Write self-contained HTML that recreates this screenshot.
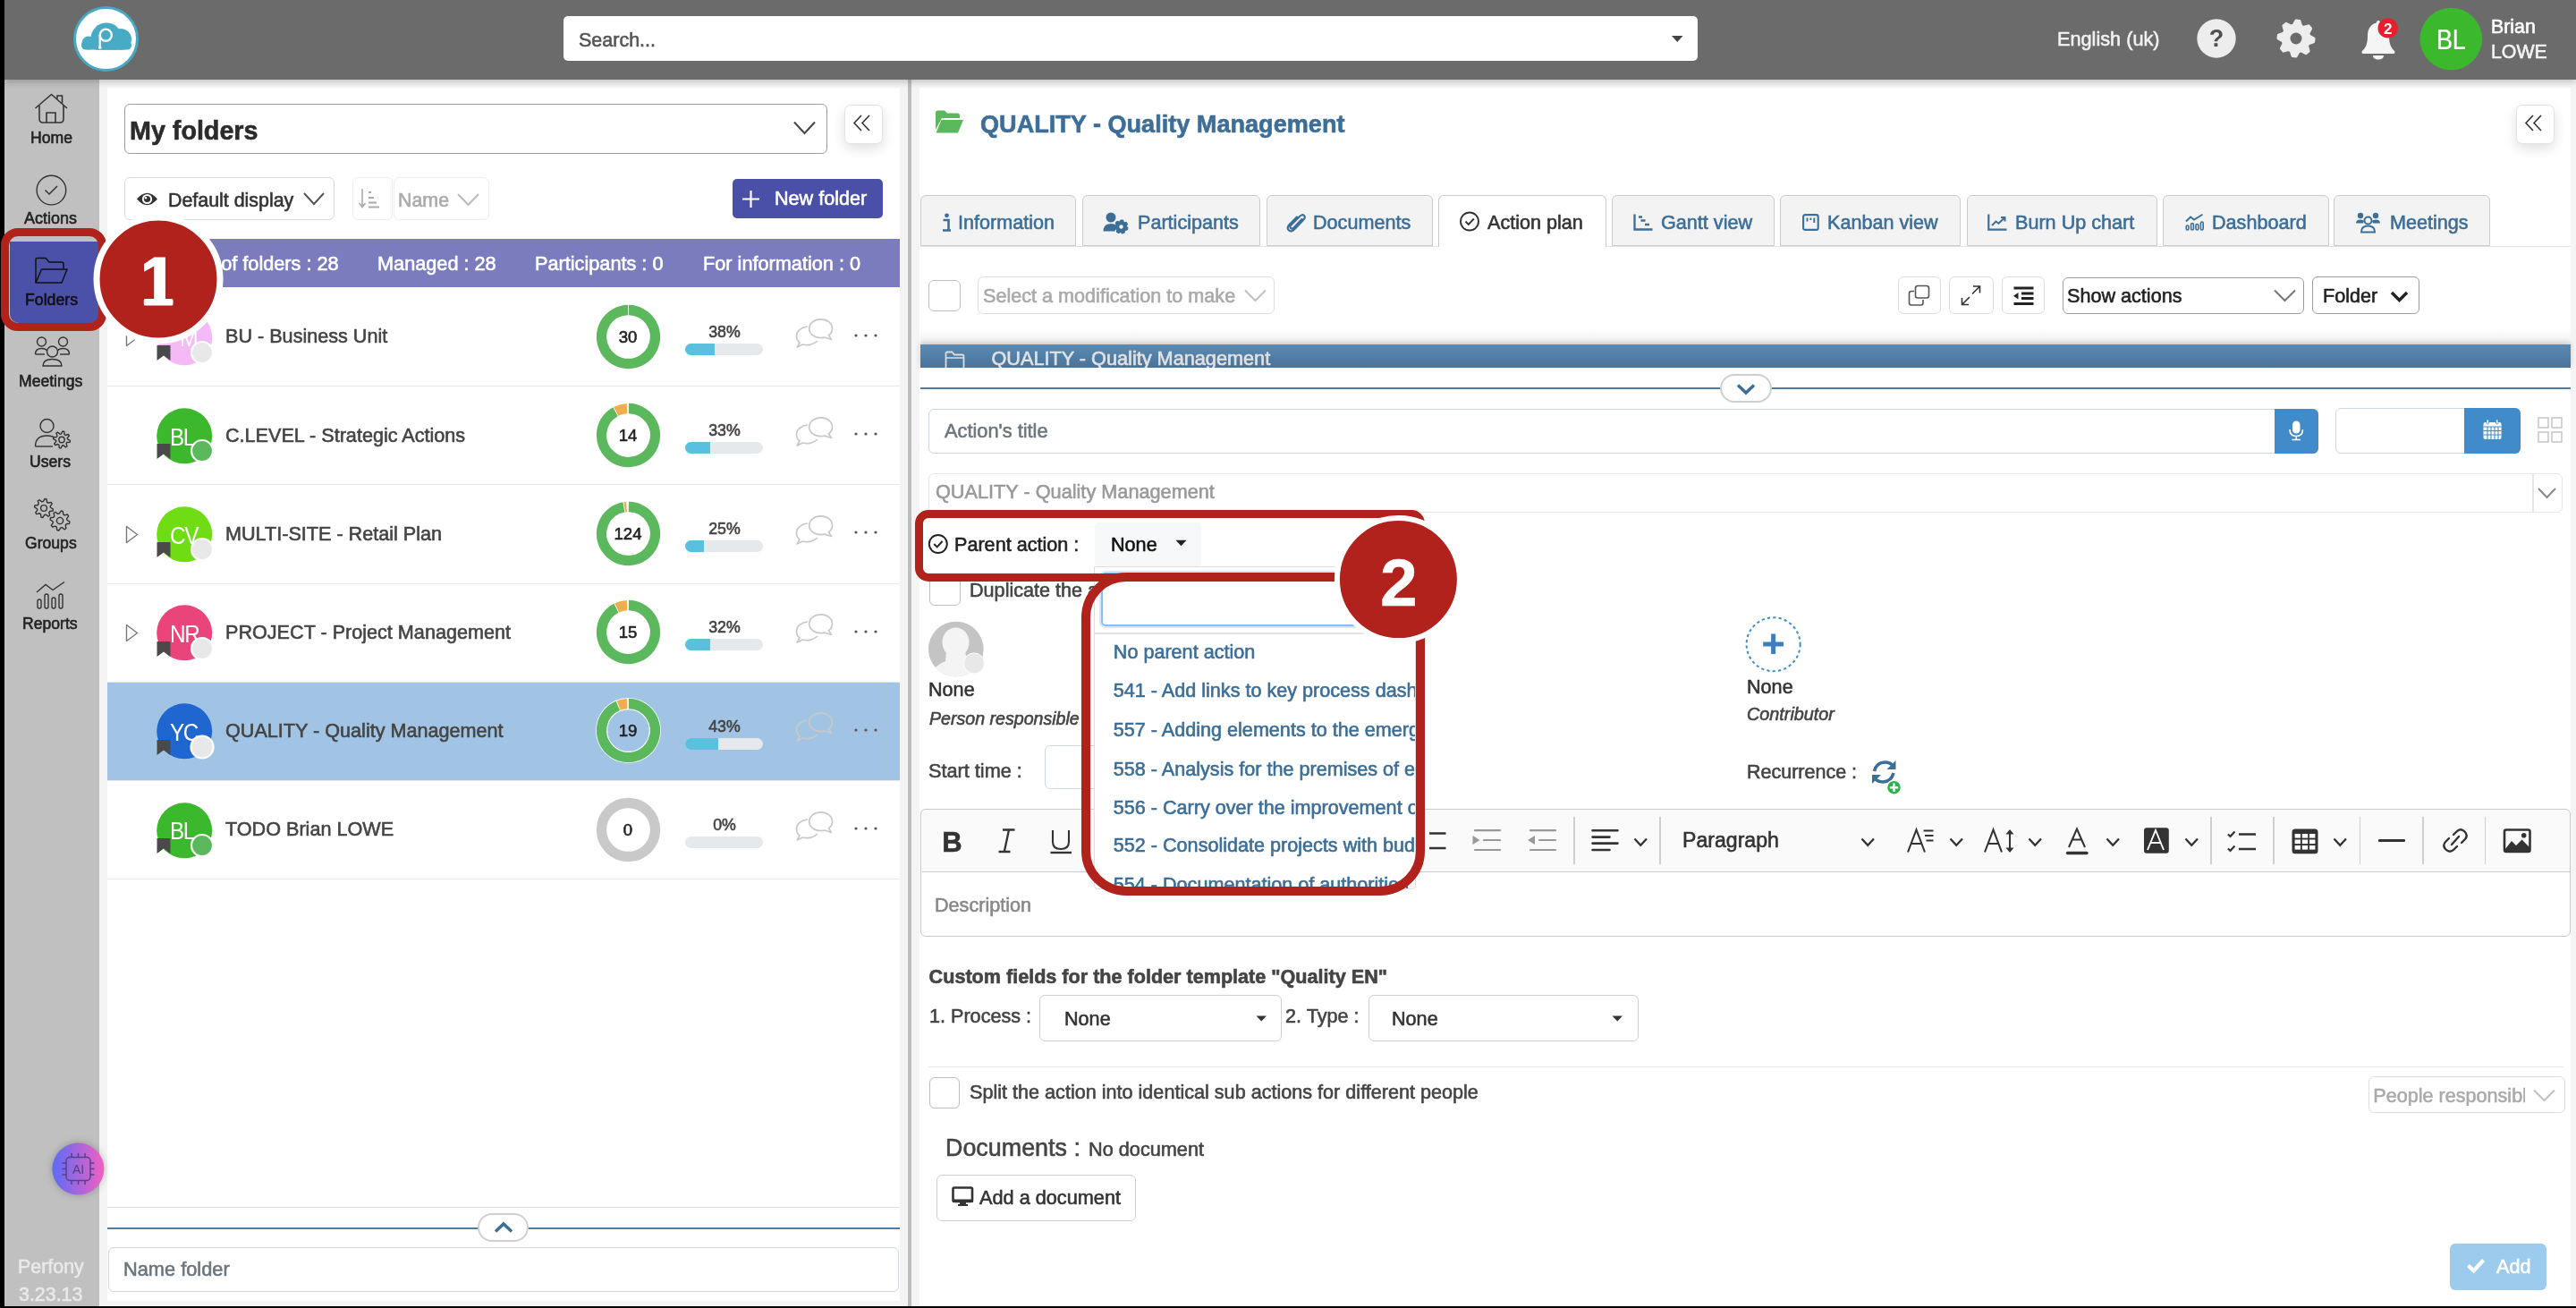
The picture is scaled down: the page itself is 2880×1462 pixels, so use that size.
<!DOCTYPE html><html><head><meta charset="utf-8"><style>
*{box-sizing:border-box;margin:0;padding:0}
html,body{width:2880px;height:1462px;overflow:hidden;background:#000;font-family:"Liberation Sans",sans-serif;color:#333;-webkit-font-smoothing:antialiased}
body{will-change:transform}
.a{position:absolute}
.t{position:absolute;white-space:nowrap;line-height:1;-webkit-text-stroke:0.6px currentColor}
svg{position:absolute;overflow:visible}
</style></head><body>
<div class="a" style="left:5px;top:89px;width:2875px;height:1371px;background:#f4f4f4"></div>
<div class="a" style="left:5px;top:89px;width:106px;height:1371px;background:#c0c0c0"></div>
<div class="a" style="left:120px;top:98px;width:886px;height:1356px;background:#fff"></div>
<div class="a" style="left:1015px;top:89px;width:4px;height:1371px;background:#bdbdbd"></div>
<div class="a" style="left:1028px;top:98px;width:1846px;height:1362px;background:#fff"></div>
<div class="a" style="left:5px;top:0px;width:2875px;height:89px;background:#6b6b6b;box-shadow:0 3px 7px rgba(0,0,0,.2)"></div>
<svg style="left:82px;top:7px;" width="73" height="73" viewBox="0 0 73 73"><circle cx="36.5" cy="36.5" r="35" fill="#fff" stroke="#47a8c4" stroke-width="3"/>
<defs><clipPath id="lgc"><rect x="0" y="0" width="73" height="48.7"/></clipPath></defs><g fill="#48abc6" clip-path="url(#lgc)"><circle cx="17" cy="41" r="7.5"/><circle cx="37" cy="36" r="17.5"/><circle cx="53" cy="37" r="12"/><rect x="9" y="38" width="56" height="10.7" rx="5.3"/></g>
<circle cx="36.3" cy="32.2" r="6.6" fill="none" stroke="#fff" stroke-width="2.4"/>
<path d="M29.7 32 V46" stroke="#fff" stroke-width="2.2" fill="none"/><circle cx="29.7" cy="46.3" r="1.7" fill="#fff"/></svg>
<div class="a" style="left:630px;top:18px;width:1268px;height:50px;background:#fff;border-radius:5px"></div>
<div class="t " style="left:647.0px;top:33.7px;font-size:22.25px;color:#555;font-weight:normal;font-style:normal;transform:scaleX(0.9662);transform-origin:left;">Search...</div>
<svg style="left:1868.5px;top:40.2px;" width="13" height="8" viewBox="0 0 13 8"><path d="M0 0 H12.5 L6.25 7 Z" fill="#444"/></svg>
<div class="t " style="left:2300.0px;top:32.6px;font-size:22.46px;color:#f2f2f2;font-weight:normal;font-style:normal;transform:scaleX(0.9662);transform-origin:left;">English (uk)</div>
<svg style="left:2456px;top:21px;" width="44" height="44" viewBox="0 0 44 44"><circle cx="22" cy="22" r="21.7" fill="#ededed"/><text x="22" y="31" text-anchor="middle" font-family="Liberation Sans" font-weight="bold" font-size="27" fill="#505050">?</text></svg>
<svg style="left:2545px;top:21px;" width="44" height="44" viewBox="0 0 44 44"><polygon points="22.00,2.00 25.90,2.38 27.74,8.14 30.33,9.53 36.14,7.86 38.63,10.89 35.86,16.26 36.71,19.07 42.00,22.00 41.62,25.90 35.86,27.74 34.47,30.33 36.14,36.14 33.11,38.63 27.74,35.86 24.93,36.71 22.00,42.00 18.10,41.62 16.26,35.86 13.67,34.47 7.86,36.14 5.37,33.11 8.14,27.74 7.29,24.93 2.00,22.00 2.38,18.10 8.14,16.26 9.53,13.67 7.86,7.86 10.89,5.37 16.26,8.14 19.07,7.29" fill="#ededed" stroke="#ededed" stroke-width="3" stroke-linejoin="round"/><circle cx="22" cy="22" r="6.5" fill="#6b6b6b"/></svg>
<svg style="left:2638px;top:20px;" width="44" height="48" viewBox="0 0 44 48"><path d="M21 3 C22.5 3 23 4 23 5.5 C30 7 33 13 33 20 C33 29 35 33 39 37 C40 38 39.5 40 38 40 H4 C2.5 40 2 38 3 37 C7 33 9 29 9 20 C9 13 12 7 19 5.5 C19 4 19.5 3 21 3 Z" fill="#f5f5f5"/>
<path d="M15 42 H27 C27 45 24.5 46.5 21 46.5 C17.5 46.5 15 45 15 42 Z" fill="#f5f5f5"/></svg>
<svg style="left:2658px;top:20px;" width="24" height="24" viewBox="0 0 24 24"><circle cx="11.7" cy="11.4" r="11.2" fill="#e8202e"/><text x="11.7" y="18" text-anchor="middle" font-family="Liberation Sans" font-weight="bold" font-size="17" fill="#fff">2</text></svg>
<svg style="left:2705px;top:8px;" width="70" height="70" viewBox="0 0 70 70"><circle cx="35.3" cy="35.5" r="34.8" fill="#3cb82d"/></svg>
<div class="t " style="left:2723.5px;top:29.3px;font-size:31.50px;color:#fff;font-weight:normal;font-style:normal;letter-spacing:-0.5px;transform:scaleX(0.86);transform-origin:left;-webkit-text-stroke:0.2px #fff">BL</div>
<div class="t " style="left:2785.0px;top:19.4px;font-size:22.05px;color:#fff;font-weight:normal;font-style:normal;transform:scaleX(0.9662);transform-origin:left;">Brian</div>
<div class="t " style="left:2785.0px;top:47.3px;font-size:22.05px;color:#f4f4f4;font-weight:normal;font-style:normal;transform:scaleX(0.9662);transform-origin:left;">LOWE</div>
<svg style="left:36px;top:102px;" width="44" height="40" viewBox="0 0 44 40"><path d="M3.5 19 L21.5 3.5 L39 19" fill="none" stroke="#333" stroke-width="1.6" stroke-linejoin="round"/>
<path d="M8 16 V31 Q8 35 12 35 H31 Q35 35 35 31 V16" fill="none" stroke="#333" stroke-width="1.6"/>
<path d="M28 8.5 V5 H33.5 V13.5" fill="none" stroke="#333" stroke-width="1.6"/>
<path d="M16 35 V24 H26 V35" fill="none" stroke="#333" stroke-width="1.6"/></svg>
<div class="t " style="left:33.5px;top:145.0px;font-size:18.22px;color:#222;font-weight:normal;font-style:normal;transform:scaleX(0.9662);transform-origin:left;">Home</div>
<svg style="left:38px;top:193px;" width="40" height="40" viewBox="0 0 40 40"><circle cx="19.4" cy="19.6" r="16.3" fill="none" stroke="#333" stroke-width="1.4"/><path d="M12.5 19.5 L17 24 L26 15" fill="none" stroke="#333" stroke-width="1.5"/></svg>
<div class="t " style="left:27.2px;top:235.4px;font-size:18.63px;color:#222;font-weight:normal;font-style:normal;transform:scaleX(0.9662);transform-origin:left;">Actions</div>
<svg style="left:36.5px;top:375px;" width="48" height="38" viewBox="0 0 48 38"><circle cx="9.5" cy="7" r="5" fill="none" stroke="#333" stroke-width="1.4"/>
<circle cx="33.5" cy="7" r="5" fill="none" stroke="#333" stroke-width="1.4"/>
<path d="M2.5 21 Q2.5 14.5 9.5 14.5 Q14 14.5 15.5 17" fill="none" stroke="#333" stroke-width="1.4"/>
<path d="M40.5 21 Q40.5 14.5 33.5 14.5 Q29 14.5 27.5 17" fill="none" stroke="#333" stroke-width="1.4"/>
<path d="M2.5 21 H13" fill="none" stroke="#333" stroke-width="1.4"/><path d="M30 21 H40.5" fill="none" stroke="#333" stroke-width="1.4"/>
<circle cx="21.5" cy="18" r="6" fill="none" stroke="#333" stroke-width="1.4"/>
<path d="M11 34 Q11 26.5 21.5 26.5 Q32 26.5 32 34 Z" fill="none" stroke="#333" stroke-width="1.4"/></svg>
<div class="t " style="left:20.5px;top:416.9px;font-size:18.22px;color:#222;font-weight:normal;font-style:normal;transform:scaleX(0.9662);transform-origin:left;">Meetings</div>
<svg style="left:36.5px;top:466px;" width="48" height="38" viewBox="0 0 48 38"><circle cx="15.5" cy="10" r="7.5" fill="none" stroke="#333" stroke-width="1.4"/>
<path d="M2.5 33 Q2.5 21 15.5 21 Q22 21 25 24" fill="none" stroke="#333" stroke-width="1.4"/><path d="M2.5 33 H22" fill="none" stroke="#333" stroke-width="1.4"/><polygon points="41.45,26.43 41.09,28.26 37.73,28.56 37.02,29.62 38.03,32.84 36.48,33.88 33.89,31.72 32.64,31.97 31.07,34.95 29.24,34.59 28.94,31.23 27.88,30.52 24.66,31.53 23.62,29.98 25.78,27.39 25.53,26.14 22.55,24.57 22.91,22.74 26.27,22.44 26.98,21.38 25.97,18.16 27.52,17.12 30.11,19.28 31.36,19.03 32.93,16.05 34.76,16.41 35.06,19.77 36.12,20.48 39.34,19.47 40.38,21.02 38.22,23.61 38.47,24.86" fill="#c0c0c0" stroke="#333" stroke-width="1.4" stroke-linejoin="round"/><circle cx="32" cy="25.5" r="3.2" fill="none" stroke="#333" stroke-width="1.4"/></svg>
<div class="t " style="left:33.3px;top:507.4px;font-size:18.22px;color:#222;font-weight:normal;font-style:normal;transform:scaleX(0.9662);transform-origin:left;">Users</div>
<svg style="left:35.5px;top:556px;" width="48" height="40" viewBox="0 0 48 40"><polygon points="23.45,13.03 23.05,15.05 19.61,15.54 18.80,16.76 19.66,20.12 17.95,21.26 15.18,19.18 13.74,19.46 11.97,22.45 9.95,22.05 9.46,18.61 8.24,17.80 4.88,18.66 3.74,16.95 5.82,14.18 5.54,12.74 2.55,10.97 2.95,8.95 6.39,8.46 7.20,7.24 6.34,3.88 8.05,2.74 10.82,4.82 12.26,4.54 14.03,1.55 16.05,1.95 16.54,5.39 17.76,6.20 21.12,5.34 22.26,7.05 20.18,9.82 20.46,11.26" fill="#c0c0c0" stroke="#333" stroke-width="1.4" stroke-linejoin="round"/><circle cx="13" cy="12" r="3.4" fill="none" stroke="#333" stroke-width="1.4"/><polygon points="41.95,27.08 41.53,29.19 38.06,29.77 37.18,31.08 37.98,34.50 36.19,35.70 33.32,33.66 31.78,33.96 29.92,36.95 27.81,36.53 27.23,33.06 25.92,32.18 22.50,32.98 21.30,31.19 23.34,28.32 23.04,26.78 20.05,24.92 20.47,22.81 23.94,22.23 24.82,20.92 24.02,17.50 25.81,16.30 28.68,18.34 30.22,18.04 32.08,15.05 34.19,15.47 34.77,18.94 36.08,19.82 39.50,19.02 40.70,20.81 38.66,23.68 38.96,25.22" fill="#c0c0c0" stroke="#333" stroke-width="1.4" stroke-linejoin="round"/><circle cx="31" cy="26" r="3.6" fill="none" stroke="#333" stroke-width="1.4"/></svg>
<div class="t " style="left:27.5px;top:597.9px;font-size:18.22px;color:#222;font-weight:normal;font-style:normal;transform:scaleX(0.9662);transform-origin:left;">Groups</div>
<svg style="left:38px;top:648px;" width="40" height="36" viewBox="0 0 40 36"><path d="M3 14 L13 5.5 L21 11.5 L34 2.5" fill="none" stroke="#333" stroke-width="1.4"/>
<rect x="4" y="22" width="4" height="10" rx="2" fill="none" stroke="#333" stroke-width="1.4"/>
<rect x="12" y="16" width="4" height="16" rx="2" fill="none" stroke="#333" stroke-width="1.4"/>
<rect x="20" y="20" width="4" height="12" rx="2" fill="none" stroke="#333" stroke-width="1.4"/>
<rect x="28" y="16" width="4" height="16" rx="2" fill="none" stroke="#333" stroke-width="1.4"/></svg>
<div class="t " style="left:25.0px;top:688.4px;font-size:18.22px;color:#222;font-weight:normal;font-style:normal;transform:scaleX(0.9662);transform-origin:left;">Reports</div>
<div class="a" style="left:10.7px;top:270px;width:100.6px;height:91px;background:#4b51a9;border-radius:0 0 10px 10px"></div>
<svg style="left:37px;top:286px;" width="42" height="34" viewBox="0 0 42 34"><path d="M3 30 V4 Q3 2.5 4.5 2.5 H14 L18 7 H32 Q34 7 34 9 V14" fill="none" stroke="#111" stroke-width="1.5" stroke-linejoin="round"/>
<path d="M3 30 L9.5 15 H38 L32 30 Z" fill="none" stroke="#111" stroke-width="1.5" stroke-linejoin="round"/></svg>
<div class="t " style="left:28.0px;top:325.9px;font-size:18.32px;color:#111;font-weight:normal;font-style:normal;transform:scaleX(0.9662);transform-origin:left;">Folders</div>
<svg style="left:56px;top:1275px;filter:drop-shadow(0 0 4px rgba(0,0,0,.25))" width="64" height="64" viewBox="0 0 64 64"><defs><linearGradient id="aig" x1="0" x2="1" y1="0" y2="0"><stop offset="0" stop-color="#5b6cf6"/><stop offset="1" stop-color="#f35fc0"/></linearGradient></defs>
<circle cx="31.4" cy="31.5" r="29" fill="url(#aig)"/>
<rect x="18" y="18.5" width="27" height="26" rx="4" fill="none" stroke="#55408a" stroke-width="1.5"/>
<path d="M24 18.5 V14 M31.5 18.5 V14 M39 18.5 V14 M24 44.5 V49 M31.5 44.5 V49 M39 44.5 V49 M18 25 H13.5 M18 31.5 H13.5 M18 38 H13.5 M45 25 H49.5 M45 31.5 H49.5 M45 38 H49.5" stroke="#55408a" stroke-width="1.5"/>
<text x="31.5" y="37" text-anchor="middle" font-family="Liberation Sans" font-size="14" fill="#55408a">AI</text></svg>
<div class="t " style="left:20.2px;top:1405.1px;font-size:22.15px;color:#e9e9e9;font-weight:normal;font-style:normal;transform:scaleX(0.9662);transform-origin:left;">Perfony</div>
<div class="t " style="left:21.0px;top:1436.1px;font-size:22.15px;color:#e9e9e9;font-weight:normal;font-style:normal;transform:scaleX(0.9662);transform-origin:left;">3.23.13</div>
<div class="a" style="left:139px;top:116px;width:786px;height:56px;border:1.5px solid #9d9d9d;border-radius:6px;background:#fff"></div>
<div class="t " style="left:145.0px;top:131.9px;font-size:28.70px;color:#2b2b2b;font-weight:bold;font-style:normal;">My folders</div>
<svg style="left:886px;top:134px;" width="28" height="18" viewBox="0 0 28 18"><path d="M2 2.5 L13.5 15 L25 2.5" fill="none" stroke="#444" stroke-width="2"/></svg>
<div class="a" style="left:944px;top:117px;width:43px;height:44px;background:#fff;border:1px solid #e3e3e3;border-radius:7px;box-shadow:0 5px 14px rgba(0,0,0,.13)"></div>
<svg style="left:953px;top:127px;" width="22" height="22" viewBox="0 0 22 22"><path d="M10 2 L2 10.5 L10 19 M19 2 L11 10.5 L19 19" fill="none" stroke="#333" stroke-width="1.6"/></svg>
<div class="a" style="left:139px;top:198px;width:235px;height:48px;border:1px solid #d9d9d9;border-radius:6px;background:#fff"></div>
<svg style="left:152px;top:212px;" width="26" height="21" viewBox="0 0 26 21"><path d="M1 10.5 Q12.5 -3 24 10.5 Q12.5 24 1 10.5 Z" fill="#333"/><circle cx="12.5" cy="10.5" r="5.6" fill="#fff"/><circle cx="12.5" cy="10.5" r="3.6" fill="#333"/><circle cx="11" cy="9.2" r="1.2" fill="#fff"/></svg>
<div class="t " style="left:187.5px;top:212.5px;font-size:22.15px;color:#333;font-weight:normal;font-style:normal;transform:scaleX(0.9662);transform-origin:left;">Default display</div>
<svg style="left:339px;top:215px;" width="24" height="15" viewBox="0 0 24 15"><path d="M1 1 L12 13 L23 1" fill="none" stroke="#555" stroke-width="2"/></svg>
<div class="a" style="left:393.5px;top:198px;width:45px;height:48px;border:1px solid #eeeeee;border-radius:6px;background:#fff"></div>
<svg style="left:401px;top:210px;" width="24" height="24" viewBox="0 0 24 24"><path d="M4 1 V21 M0.5 17 L4 21.5 L7.5 17" fill="none" stroke="#aaa" stroke-width="1.6"/><path d="M11 5 H14 M11 11 H17 M11 16.5 H20 M11 21.5 H23" stroke="#aaa" stroke-width="2"/></svg>
<div class="a" style="left:440px;top:198px;width:107px;height:48px;border:1px solid #eeeeee;border-radius:6px;background:#fff"></div>
<div class="t " style="left:445.3px;top:212.5px;font-size:22.15px;color:#aaa;font-weight:normal;font-style:normal;transform:scaleX(0.9662);transform-origin:left;">Name</div>
<svg style="left:511px;top:216px;" width="25" height="15" viewBox="0 0 25 15"><path d="M1 1 L12.5 13 L24 1" fill="none" stroke="#bbb" stroke-width="2"/></svg>
<div class="a" style="left:819px;top:200px;width:168px;height:44px;background:#4a4fa8;border-radius:5px"></div>
<svg style="left:830px;top:213px;" width="19" height="19" viewBox="0 0 19 19"><path d="M9.5 0 V19 M0 9.5 H19" stroke="#fff" stroke-width="2.2"/></svg>
<div class="t " style="left:866.0px;top:210.9px;font-size:22.36px;color:#fff;font-weight:normal;font-style:normal;transform:scaleX(0.9662);transform-origin:left;">New folder</div>
<div class="a" style="left:120px;top:267.2px;width:886px;height:54.3px;background:#7a7cbe"></div>
<div class="t " style="left:164.4px;top:283.8px;font-size:22.46px;color:#fff;font-weight:normal;font-style:normal;transform:scaleX(0.9662);transform-origin:left;">Number of folders : 28</div>
<div class="t " style="left:422.0px;top:283.8px;font-size:22.46px;color:#fff;font-weight:normal;font-style:normal;transform:scaleX(0.9662);transform-origin:left;">Managed : 28</div>
<div class="t " style="left:598.0px;top:283.8px;font-size:22.46px;color:#fff;font-weight:normal;font-style:normal;transform:scaleX(0.9662);transform-origin:left;">Participants : 0</div>
<div class="t " style="left:786.0px;top:283.8px;font-size:22.46px;color:#fff;font-weight:normal;font-style:normal;transform:scaleX(0.9662);transform-origin:left;">For information : 0</div>
<div class="a" style="left:120px;top:431.1px;width:886px;height:1.2px;background:#e6e6e6"></div>
<svg style="left:140px;top:366.5px;" width="16" height="22" viewBox="0 0 16 22"><path d="M1.5 1.5 L13.5 10.5 L1.5 19.5 Z" fill="none" stroke="#777" stroke-width="1.4" stroke-linejoin="round"/></svg>
<svg style="left:175px;top:345.5px;" width="64" height="64" viewBox="0 0 64 64"><circle cx="31.2" cy="31.3" r="31" fill="#f5b9f5"/></svg>
<div class="t " style="left:201.0px;top:365.4px;font-size:27.00px;color:#fff;font-weight:normal;font-style:normal;transform:scaleX(.92);transform-origin:left;-webkit-text-stroke:0">M</div>
<svg style="left:174.5px;top:386.0px;" width="16" height="18" viewBox="0 0 16 18"><path d="M0.5 0 H15.5 V17 L8 11.5 L0.5 17 Z" fill="#4a4a4a"/></svg>
<svg style="left:212px;top:380.0px;" width="28" height="28" viewBox="0 0 28 28"><circle cx="14" cy="14" r="12" fill="#e8e8e8" stroke="#fff" stroke-width="2.2"/></svg>
<div class="t " style="left:251.9px;top:365.4px;font-size:22.36px;color:#444;font-weight:normal;font-style:normal;transform:scaleX(0.9662);transform-origin:left;">BU - Business Unit</div>
<svg style="left:666.7px;top:340.6px;" width="71" height="71" viewBox="0 0 71 71"><path d="M35.92 5.50 A30 30 0 1 1 35.08 5.50" fill="none" stroke="#5cb85c" stroke-width="11.3"/></svg>
<div class="t " style="left:702.2px;top:366.5px;font-size:19.25px;color:#222;font-weight:normal;font-style:normal;transform:translateX(-50%) scaleX(0.9662);transform-origin:center;">30</div>
<div class="t " style="left:809.6px;top:361.7px;font-size:18.42px;color:#444;font-weight:normal;font-style:normal;transform:translateX(-50%) scaleX(0.9662);transform-origin:center;">38%</div>
<div class="a" style="left:765.7px;top:383.8px;width:87.2px;height:13.1px;background:#e6e9ec;border-radius:7px;overflow:hidden"></div>
<div class="a" style="left:765.7px;top:383.8px;width:33.135999999999996px;height:13.1px;background:#5bc0de;border-radius:7px 0 0 7px"></div>
<svg style="left:889px;top:354.5px;" width="44" height="36" viewBox="0 0 44 36"><path d="M14 10 C7 10.5 1.5 15 1.5 20.5 C1.5 24 3 26.5 5 28 L2.2 33 L8.5 30 C14 31.5 21 30 25 26" fill="none" stroke="#c8c8c8" stroke-width="1.7" stroke-linejoin="round"/>
<path d="M28.6 1.9 C36 1.9 41.5 6.5 41.5 12.2 C41.5 15.5 40 18 37.5 19.8 L40.5 24.5 L33.5 22.2 C32 22.5 30.3 22.6 28.6 22.6 C21.5 22.6 15.7 18 15.7 12.2 C15.7 6.5 21.5 1.9 28.6 1.9 Z" fill="none" stroke="#c8c8c8" stroke-width="1.7" stroke-linejoin="round"/></svg>
<svg style="left:954.7px;top:373.0px;" width="4" height="4" viewBox="0 0 4 4"><circle cx="2" cy="2" r="1.6" fill="#555"/></svg>
<svg style="left:965.5px;top:373.0px;" width="4" height="4" viewBox="0 0 4 4"><circle cx="2" cy="2" r="1.6" fill="#555"/></svg>
<svg style="left:976.7px;top:373.0px;" width="4" height="4" viewBox="0 0 4 4"><circle cx="2" cy="2" r="1.6" fill="#555"/></svg>
<div class="a" style="left:120px;top:541.3px;width:886px;height:1.2px;background:#e6e6e6"></div>
<svg style="left:175px;top:455.7px;" width="64" height="64" viewBox="0 0 64 64"><circle cx="31.2" cy="31.3" r="31" fill="#3cb82d"/></svg>
<div class="t " style="left:189.5px;top:475.6px;font-size:27.00px;color:#fff;font-weight:normal;font-style:normal;letter-spacing:-1.5px;transform:scaleX(.9);transform-origin:left;-webkit-text-stroke:0">BL</div>
<svg style="left:174.5px;top:496.2px;" width="16" height="18" viewBox="0 0 16 18"><path d="M0.5 0 H15.5 V17 L8 11.5 L0.5 17 Z" fill="#4a4a4a"/></svg>
<svg style="left:212px;top:490.2px;" width="28" height="28" viewBox="0 0 28 28"><circle cx="14" cy="14" r="12" fill="#5cb85c" stroke="#fff" stroke-width="2.2"/></svg>
<div class="t " style="left:251.9px;top:475.6px;font-size:22.36px;color:#444;font-weight:normal;font-style:normal;transform:scaleX(0.9662);transform-origin:left;">C.LEVEL - Strategic Actions</div>
<svg style="left:666.7px;top:450.8px;" width="71" height="71" viewBox="0 0 71 71"><path d="M35.92 5.50 A30 30 0 1 1 21.05 9.21" fill="none" stroke="#5cb85c" stroke-width="11.3"/><path d="M21.79 8.82 A30 30 0 0 1 34.03 5.54" fill="none" stroke="#f0ad4e" stroke-width="11.3"/></svg>
<div class="t " style="left:702.2px;top:476.7px;font-size:19.25px;color:#222;font-weight:normal;font-style:normal;transform:translateX(-50%) scaleX(0.9662);transform-origin:center;">14</div>
<div class="t " style="left:809.6px;top:471.9px;font-size:18.42px;color:#444;font-weight:normal;font-style:normal;transform:translateX(-50%) scaleX(0.9662);transform-origin:center;">33%</div>
<div class="a" style="left:765.7px;top:494.0px;width:87.2px;height:13.1px;background:#e6e9ec;border-radius:7px;overflow:hidden"></div>
<div class="a" style="left:765.7px;top:494.0px;width:28.776px;height:13.1px;background:#5bc0de;border-radius:7px 0 0 7px"></div>
<svg style="left:889px;top:464.7px;" width="44" height="36" viewBox="0 0 44 36"><path d="M14 10 C7 10.5 1.5 15 1.5 20.5 C1.5 24 3 26.5 5 28 L2.2 33 L8.5 30 C14 31.5 21 30 25 26" fill="none" stroke="#c8c8c8" stroke-width="1.7" stroke-linejoin="round"/>
<path d="M28.6 1.9 C36 1.9 41.5 6.5 41.5 12.2 C41.5 15.5 40 18 37.5 19.8 L40.5 24.5 L33.5 22.2 C32 22.5 30.3 22.6 28.6 22.6 C21.5 22.6 15.7 18 15.7 12.2 C15.7 6.5 21.5 1.9 28.6 1.9 Z" fill="none" stroke="#c8c8c8" stroke-width="1.7" stroke-linejoin="round"/></svg>
<svg style="left:954.7px;top:483.2px;" width="4" height="4" viewBox="0 0 4 4"><circle cx="2" cy="2" r="1.6" fill="#555"/></svg>
<svg style="left:965.5px;top:483.2px;" width="4" height="4" viewBox="0 0 4 4"><circle cx="2" cy="2" r="1.6" fill="#555"/></svg>
<svg style="left:976.7px;top:483.2px;" width="4" height="4" viewBox="0 0 4 4"><circle cx="2" cy="2" r="1.6" fill="#555"/></svg>
<div class="a" style="left:120px;top:651.5px;width:886px;height:1.2px;background:#e6e6e6"></div>
<svg style="left:140px;top:586.9px;" width="16" height="22" viewBox="0 0 16 22"><path d="M1.5 1.5 L13.5 10.5 L1.5 19.5 Z" fill="none" stroke="#777" stroke-width="1.4" stroke-linejoin="round"/></svg>
<svg style="left:175px;top:565.9px;" width="64" height="64" viewBox="0 0 64 64"><circle cx="31.2" cy="31.3" r="31" fill="#70dc14"/></svg>
<div class="t " style="left:189.5px;top:585.8px;font-size:27.00px;color:#fff;font-weight:normal;font-style:normal;letter-spacing:-1.5px;transform:scaleX(.9);transform-origin:left;-webkit-text-stroke:0">CV</div>
<svg style="left:174.5px;top:606.4px;" width="16" height="18" viewBox="0 0 16 18"><path d="M0.5 0 H15.5 V17 L8 11.5 L0.5 17 Z" fill="#4a4a4a"/></svg>
<svg style="left:212px;top:600.4px;" width="28" height="28" viewBox="0 0 28 28"><circle cx="14" cy="14" r="12" fill="#e8e8e8" stroke="#fff" stroke-width="2.2"/></svg>
<div class="t " style="left:251.9px;top:585.8px;font-size:22.36px;color:#444;font-weight:normal;font-style:normal;transform:scaleX(0.9662);transform-origin:left;">MULTI-SITE - Retail Plan</div>
<svg style="left:666.7px;top:561.0px;" width="71" height="71" viewBox="0 0 71 71"><path d="M35.92 5.50 A30 30 0 1 1 30.39 5.94" fill="none" stroke="#5cb85c" stroke-width="11.3"/><path d="M31.22 5.81 A30 30 0 0 1 33.51 5.57" fill="none" stroke="#f0ad4e" stroke-width="11.3"/></svg>
<div class="t " style="left:702.2px;top:586.9px;font-size:19.25px;color:#222;font-weight:normal;font-style:normal;transform:translateX(-50%) scaleX(0.9662);transform-origin:center;">124</div>
<div class="t " style="left:809.6px;top:582.1px;font-size:18.42px;color:#444;font-weight:normal;font-style:normal;transform:translateX(-50%) scaleX(0.9662);transform-origin:center;">25%</div>
<div class="a" style="left:765.7px;top:604.1999999999999px;width:87.2px;height:13.1px;background:#e6e9ec;border-radius:7px;overflow:hidden"></div>
<div class="a" style="left:765.7px;top:604.1999999999999px;width:21.8px;height:13.1px;background:#5bc0de;border-radius:7px 0 0 7px"></div>
<svg style="left:889px;top:574.9px;" width="44" height="36" viewBox="0 0 44 36"><path d="M14 10 C7 10.5 1.5 15 1.5 20.5 C1.5 24 3 26.5 5 28 L2.2 33 L8.5 30 C14 31.5 21 30 25 26" fill="none" stroke="#c8c8c8" stroke-width="1.7" stroke-linejoin="round"/>
<path d="M28.6 1.9 C36 1.9 41.5 6.5 41.5 12.2 C41.5 15.5 40 18 37.5 19.8 L40.5 24.5 L33.5 22.2 C32 22.5 30.3 22.6 28.6 22.6 C21.5 22.6 15.7 18 15.7 12.2 C15.7 6.5 21.5 1.9 28.6 1.9 Z" fill="none" stroke="#c8c8c8" stroke-width="1.7" stroke-linejoin="round"/></svg>
<svg style="left:954.7px;top:593.4px;" width="4" height="4" viewBox="0 0 4 4"><circle cx="2" cy="2" r="1.6" fill="#555"/></svg>
<svg style="left:965.5px;top:593.4px;" width="4" height="4" viewBox="0 0 4 4"><circle cx="2" cy="2" r="1.6" fill="#555"/></svg>
<svg style="left:976.7px;top:593.4px;" width="4" height="4" viewBox="0 0 4 4"><circle cx="2" cy="2" r="1.6" fill="#555"/></svg>
<div class="a" style="left:120px;top:761.7px;width:886px;height:1.2px;background:#e6e6e6"></div>
<svg style="left:140px;top:697.1px;" width="16" height="22" viewBox="0 0 16 22"><path d="M1.5 1.5 L13.5 10.5 L1.5 19.5 Z" fill="none" stroke="#777" stroke-width="1.4" stroke-linejoin="round"/></svg>
<svg style="left:175px;top:676.1px;" width="64" height="64" viewBox="0 0 64 64"><circle cx="31.2" cy="31.3" r="31" fill="#ea457b"/></svg>
<div class="t " style="left:189.5px;top:696.0px;font-size:27.00px;color:#fff;font-weight:normal;font-style:normal;letter-spacing:-1.5px;transform:scaleX(.9);transform-origin:left;-webkit-text-stroke:0">NR</div>
<svg style="left:174.5px;top:716.6px;" width="16" height="18" viewBox="0 0 16 18"><path d="M0.5 0 H15.5 V17 L8 11.5 L0.5 17 Z" fill="#4a4a4a"/></svg>
<svg style="left:212px;top:710.6px;" width="28" height="28" viewBox="0 0 28 28"><circle cx="14" cy="14" r="12" fill="#e8e8e8" stroke="#fff" stroke-width="2.2"/></svg>
<div class="t " style="left:251.9px;top:696.0px;font-size:22.36px;color:#444;font-weight:normal;font-style:normal;transform:scaleX(0.9662);transform-origin:left;">PROJECT - Project Management</div>
<svg style="left:666.7px;top:671.2px;" width="71" height="71" viewBox="0 0 71 71"><path d="M35.92 5.50 A30 30 0 1 1 21.97 8.72" fill="none" stroke="#5cb85c" stroke-width="11.3"/><path d="M22.73 8.36 A30 30 0 0 1 34.03 5.54" fill="none" stroke="#f0ad4e" stroke-width="11.3"/></svg>
<div class="t " style="left:702.2px;top:697.1px;font-size:19.25px;color:#222;font-weight:normal;font-style:normal;transform:translateX(-50%) scaleX(0.9662);transform-origin:center;">15</div>
<div class="t " style="left:809.6px;top:692.3px;font-size:18.42px;color:#444;font-weight:normal;font-style:normal;transform:translateX(-50%) scaleX(0.9662);transform-origin:center;">32%</div>
<div class="a" style="left:765.7px;top:714.4px;width:87.2px;height:13.1px;background:#e6e9ec;border-radius:7px;overflow:hidden"></div>
<div class="a" style="left:765.7px;top:714.4px;width:27.904px;height:13.1px;background:#5bc0de;border-radius:7px 0 0 7px"></div>
<svg style="left:889px;top:685.1px;" width="44" height="36" viewBox="0 0 44 36"><path d="M14 10 C7 10.5 1.5 15 1.5 20.5 C1.5 24 3 26.5 5 28 L2.2 33 L8.5 30 C14 31.5 21 30 25 26" fill="none" stroke="#c8c8c8" stroke-width="1.7" stroke-linejoin="round"/>
<path d="M28.6 1.9 C36 1.9 41.5 6.5 41.5 12.2 C41.5 15.5 40 18 37.5 19.8 L40.5 24.5 L33.5 22.2 C32 22.5 30.3 22.6 28.6 22.6 C21.5 22.6 15.7 18 15.7 12.2 C15.7 6.5 21.5 1.9 28.6 1.9 Z" fill="none" stroke="#c8c8c8" stroke-width="1.7" stroke-linejoin="round"/></svg>
<svg style="left:954.7px;top:703.6px;" width="4" height="4" viewBox="0 0 4 4"><circle cx="2" cy="2" r="1.6" fill="#555"/></svg>
<svg style="left:965.5px;top:703.6px;" width="4" height="4" viewBox="0 0 4 4"><circle cx="2" cy="2" r="1.6" fill="#555"/></svg>
<svg style="left:976.7px;top:703.6px;" width="4" height="4" viewBox="0 0 4 4"><circle cx="2" cy="2" r="1.6" fill="#555"/></svg>
<div class="a" style="left:120px;top:763.0999999999999px;width:886px;height:109.4px;background:#a1c4e4"></div>
<div class="a" style="left:120px;top:871.9px;width:886px;height:1.2px;background:#e6e6e6"></div>
<svg style="left:175px;top:786.3px;" width="64" height="64" viewBox="0 0 64 64"><circle cx="31.2" cy="31.3" r="31" fill="#2066d1"/></svg>
<div class="t " style="left:189.5px;top:806.2px;font-size:27.00px;color:#fff;font-weight:normal;font-style:normal;letter-spacing:-1.5px;transform:scaleX(.9);transform-origin:left;-webkit-text-stroke:0">YC</div>
<svg style="left:174.5px;top:826.8px;" width="16" height="18" viewBox="0 0 16 18"><path d="M0.5 0 H15.5 V17 L8 11.5 L0.5 17 Z" fill="#4a4a4a"/></svg>
<svg style="left:212px;top:820.8px;" width="28" height="28" viewBox="0 0 28 28"><circle cx="14" cy="14" r="12.5" fill="#e8e8e8" stroke="#fff" stroke-width="2.2"/></svg>
<div class="t " style="left:251.9px;top:806.2px;font-size:22.36px;color:#444;font-weight:normal;font-style:normal;transform:scaleX(0.9662);transform-origin:left;">QUALITY - Quality Management</div>
<svg style="left:666.7px;top:781.4px;" width="71" height="71" viewBox="0 0 71 71"><circle cx="35.5" cy="35.5" r="36.5" fill="#fff"/><circle cx="35.5" cy="35.5" r="24" fill="#a1c4e4" stroke="#fff" stroke-width="1.5"/><path d="M35.92 5.50 A30 30 0 1 1 23.87 7.84" fill="none" stroke="#5cb85c" stroke-width="11.3"/><path d="M24.65 7.53 A30 30 0 0 1 34.03 5.54" fill="none" stroke="#f0ad4e" stroke-width="11.3"/></svg>
<div class="t " style="left:702.2px;top:807.3px;font-size:19.25px;color:#222;font-weight:normal;font-style:normal;transform:translateX(-50%) scaleX(0.9662);transform-origin:center;">19</div>
<div class="t " style="left:809.6px;top:802.5px;font-size:18.42px;color:#444;font-weight:normal;font-style:normal;transform:translateX(-50%) scaleX(0.9662);transform-origin:center;">43%</div>
<div class="a" style="left:765.7px;top:824.5999999999999px;width:87.2px;height:13.1px;background:#e6e9ec;border-radius:7px;overflow:hidden"></div>
<div class="a" style="left:765.7px;top:824.5999999999999px;width:37.496px;height:13.1px;background:#5bc0de;border-radius:7px 0 0 7px"></div>
<svg style="left:889px;top:795.3px;" width="44" height="36" viewBox="0 0 44 36"><path d="M14 10 C7 10.5 1.5 15 1.5 20.5 C1.5 24 3 26.5 5 28 L2.2 33 L8.5 30 C14 31.5 21 30 25 26" fill="none" stroke="#c8c8c8" stroke-width="1.7" stroke-linejoin="round"/>
<path d="M28.6 1.9 C36 1.9 41.5 6.5 41.5 12.2 C41.5 15.5 40 18 37.5 19.8 L40.5 24.5 L33.5 22.2 C32 22.5 30.3 22.6 28.6 22.6 C21.5 22.6 15.7 18 15.7 12.2 C15.7 6.5 21.5 1.9 28.6 1.9 Z" fill="none" stroke="#c8c8c8" stroke-width="1.7" stroke-linejoin="round"/></svg>
<svg style="left:954.7px;top:813.8px;" width="4" height="4" viewBox="0 0 4 4"><circle cx="2" cy="2" r="1.6" fill="#555"/></svg>
<svg style="left:965.5px;top:813.8px;" width="4" height="4" viewBox="0 0 4 4"><circle cx="2" cy="2" r="1.6" fill="#555"/></svg>
<svg style="left:976.7px;top:813.8px;" width="4" height="4" viewBox="0 0 4 4"><circle cx="2" cy="2" r="1.6" fill="#555"/></svg>
<div class="a" style="left:120px;top:982.1px;width:886px;height:1.2px;background:#e6e6e6"></div>
<svg style="left:175px;top:896.5px;" width="64" height="64" viewBox="0 0 64 64"><circle cx="31.2" cy="31.3" r="31" fill="#3cb82d"/></svg>
<div class="t " style="left:189.5px;top:916.4px;font-size:27.00px;color:#fff;font-weight:normal;font-style:normal;letter-spacing:-1.5px;transform:scaleX(.9);transform-origin:left;-webkit-text-stroke:0">BL</div>
<svg style="left:174.5px;top:937.0px;" width="16" height="18" viewBox="0 0 16 18"><path d="M0.5 0 H15.5 V17 L8 11.5 L0.5 17 Z" fill="#4a4a4a"/></svg>
<svg style="left:212px;top:931.0px;" width="28" height="28" viewBox="0 0 28 28"><circle cx="14" cy="14" r="12" fill="#5cb85c" stroke="#fff" stroke-width="2.2"/></svg>
<div class="t " style="left:251.9px;top:916.4px;font-size:22.36px;color:#444;font-weight:normal;font-style:normal;transform:scaleX(0.9662);transform-origin:left;">TODO Brian LOWE</div>
<svg style="left:666.7px;top:891.6px;" width="71" height="71" viewBox="0 0 71 71"><circle cx="35.5" cy="35.5" r="30" fill="none" stroke="#c9c9c9" stroke-width="11.3"/></svg>
<div class="t " style="left:702.2px;top:917.5px;font-size:19.25px;color:#222;font-weight:normal;font-style:normal;transform:translateX(-50%) scaleX(0.9662);transform-origin:center;">0</div>
<div class="t " style="left:809.6px;top:912.7px;font-size:18.42px;color:#444;font-weight:normal;font-style:normal;transform:translateX(-50%) scaleX(0.9662);transform-origin:center;">0%</div>
<div class="a" style="left:765.7px;top:934.8px;width:87.2px;height:13.1px;background:#e6e9ec;border-radius:7px;overflow:hidden"></div>
<svg style="left:889px;top:905.5px;" width="44" height="36" viewBox="0 0 44 36"><path d="M14 10 C7 10.5 1.5 15 1.5 20.5 C1.5 24 3 26.5 5 28 L2.2 33 L8.5 30 C14 31.5 21 30 25 26" fill="none" stroke="#c8c8c8" stroke-width="1.7" stroke-linejoin="round"/>
<path d="M28.6 1.9 C36 1.9 41.5 6.5 41.5 12.2 C41.5 15.5 40 18 37.5 19.8 L40.5 24.5 L33.5 22.2 C32 22.5 30.3 22.6 28.6 22.6 C21.5 22.6 15.7 18 15.7 12.2 C15.7 6.5 21.5 1.9 28.6 1.9 Z" fill="none" stroke="#c8c8c8" stroke-width="1.7" stroke-linejoin="round"/></svg>
<svg style="left:954.7px;top:924.0px;" width="4" height="4" viewBox="0 0 4 4"><circle cx="2" cy="2" r="1.6" fill="#555"/></svg>
<svg style="left:965.5px;top:924.0px;" width="4" height="4" viewBox="0 0 4 4"><circle cx="2" cy="2" r="1.6" fill="#555"/></svg>
<svg style="left:976.7px;top:924.0px;" width="4" height="4" viewBox="0 0 4 4"><circle cx="2" cy="2" r="1.6" fill="#555"/></svg>
<div class="a" style="left:120px;top:1348.5px;width:886px;height:1.5px;background:#dcdcdc"></div>
<div class="a" style="left:120px;top:1371.5px;width:886px;height:2px;background:#4d7ba3"></div>
<div class="a" style="left:534px;top:1356px;width:57px;height:32px;background:#fff;border:2px solid #cfcfcf;border-radius:16px"></div>
<svg style="left:551px;top:1364px;" width="24" height="16" viewBox="0 0 24 16"><path d="M3 12.5 L12 4 L21 12.5" fill="none" stroke="#3c6e98" stroke-width="3.5"/></svg>
<div class="a" style="left:121px;top:1394px;width:884px;height:50px;background:#fff;border:1px solid #cfd6dd;border-radius:6px"></div>
<div class="t " style="left:138.0px;top:1407.7px;font-size:22.56px;color:#6c757d;font-weight:normal;font-style:normal;transform:scaleX(0.9662);transform-origin:left;">Name folder</div>
<svg style="left:1046px;top:123px;" width="32" height="26" viewBox="0 0 32 26"><path d="M0 3 Q0 0.5 2.5 0.5 H10 L13 3.5 H25 Q27 3.5 27 6 V9 H7 L0 22 Z" fill="#5cb85c"/><path d="M6.5 11 H31 L25 25.5 H0.5 Z" fill="#5cb85c"/></svg>
<div class="t " style="left:1096.0px;top:124.5px;font-size:27.10px;color:#3c6e98;font-weight:bold;font-style:normal;">QUALITY - Quality Management</div>
<div class="a" style="left:2812.6px;top:117.4px;width:43.4px;height:43.4px;background:#fff;border:1px solid #e3e3e3;border-radius:7px;box-shadow:0 5px 14px rgba(0,0,0,.13)"></div>
<svg style="left:2822px;top:127px;" width="22" height="22" viewBox="0 0 22 22"><path d="M10 2 L2 10.5 L10 19 M19 2 L11 10.5 L19 19" fill="none" stroke="#333" stroke-width="1.6"/></svg>
<div class="a" style="left:1029px;top:274.5px;width:1845px;height:1.5px;background:#dde3e8"></div>
<div class="a" style="left:1029px;top:217.6px;width:174.29999999999995px;height:57.5px;background:#f3f3f3;border:1.5px solid #cbcbcb;border-radius:6px 6px 0 0"></div>
<div class="t " style="left:1071.0px;top:237.9px;font-size:22.36px;color:#3c6e98;font-weight:normal;font-style:normal;transform:scaleX(0.9662);transform-origin:left;">Information</div>
<div class="a" style="left:1210.3px;top:217.6px;width:198.70000000000005px;height:57.5px;background:#f3f3f3;border:1.5px solid #cbcbcb;border-radius:6px 6px 0 0"></div>
<div class="t " style="left:1271.6px;top:237.9px;font-size:22.36px;color:#3c6e98;font-weight:normal;font-style:normal;transform:scaleX(0.9662);transform-origin:left;">Participants</div>
<div class="a" style="left:1416px;top:217.6px;width:186.4000000000001px;height:57.5px;background:#f3f3f3;border:1.5px solid #cbcbcb;border-radius:6px 6px 0 0"></div>
<div class="t " style="left:1468.4px;top:237.9px;font-size:22.36px;color:#3c6e98;font-weight:normal;font-style:normal;transform:scaleX(0.9662);transform-origin:left;">Documents</div>
<div class="a" style="left:1608px;top:217.6px;width:187.70000000000005px;height:58.5px;background:#fff;border:1.5px solid #cbcbcb;border-bottom:none;border-radius:6px 6px 0 0"></div>
<div class="t " style="left:1663.4px;top:237.9px;font-size:22.36px;color:#333;font-weight:normal;font-style:normal;transform:scaleX(0.9662);transform-origin:left;">Action plan</div>
<div class="a" style="left:1801.5px;top:217.6px;width:182.79999999999995px;height:57.5px;background:#f3f3f3;border:1.5px solid #cbcbcb;border-radius:6px 6px 0 0"></div>
<div class="t " style="left:1857.4px;top:237.9px;font-size:22.36px;color:#3c6e98;font-weight:normal;font-style:normal;transform:scaleX(0.9662);transform-origin:left;">Gantt view</div>
<div class="a" style="left:1990.2px;top:217.6px;width:201.49999999999977px;height:57.5px;background:#f3f3f3;border:1.5px solid #cbcbcb;border-radius:6px 6px 0 0"></div>
<div class="t " style="left:2042.6px;top:237.9px;font-size:22.36px;color:#3c6e98;font-weight:normal;font-style:normal;transform:scaleX(0.9662);transform-origin:left;">Kanban view</div>
<div class="a" style="left:2199px;top:217.6px;width:213px;height:57.5px;background:#f3f3f3;border:1.5px solid #cbcbcb;border-radius:6px 6px 0 0"></div>
<div class="t " style="left:2253.0px;top:237.9px;font-size:22.36px;color:#3c6e98;font-weight:normal;font-style:normal;transform:scaleX(0.9662);transform-origin:left;">Burn Up chart</div>
<div class="a" style="left:2418px;top:217.6px;width:186px;height:57.5px;background:#f3f3f3;border:1.5px solid #cbcbcb;border-radius:6px 6px 0 0"></div>
<div class="t " style="left:2473.0px;top:237.9px;font-size:22.36px;color:#3c6e98;font-weight:normal;font-style:normal;transform:scaleX(0.9662);transform-origin:left;">Dashboard</div>
<div class="a" style="left:2609px;top:217.6px;width:175px;height:57.5px;background:#f3f3f3;border:1.5px solid #cbcbcb;border-radius:6px 6px 0 0"></div>
<div class="t " style="left:2671.5px;top:237.9px;font-size:22.36px;color:#3c6e98;font-weight:normal;font-style:normal;transform:scaleX(0.9662);transform-origin:left;">Meetings</div>
<svg style="left:1053px;top:238px;" width="12" height="22" viewBox="0 0 12 22"><circle cx="5.5" cy="2.8" r="2.4" fill="#3c6e98"/><path d="M1.5 8 H7.5 V19.5 H10 M1 19.5 H7" fill="none" stroke="#3c6e98" stroke-width="2.6"/></svg>
<svg style="left:1233px;top:237px;" width="30" height="24" viewBox="0 0 30 24"><circle cx="9" cy="6" r="5.5" fill="#3c6e98"/><path d="M0.5 21.5 Q0.5 13 9 13 Q13 13 15.5 15 L13.5 21.5 Z" fill="#3c6e98"/><polygon points="20.50,9.90 21.97,10.07 22.58,12.18 23.49,12.75 25.66,12.38 26.45,13.64 25.18,15.43 25.30,16.50 26.93,17.97 26.45,19.36 24.25,19.49 23.49,20.25 23.36,22.45 21.97,22.93 20.50,21.30 19.43,21.18 17.64,22.45 16.38,21.66 16.75,19.49 16.18,18.58 14.07,17.97 13.90,16.50 15.82,15.43 16.18,14.42 15.34,12.38 16.38,11.34 18.42,12.18 19.43,11.82" fill="#3c6e98" stroke="#3c6e98" stroke-width="3" stroke-linejoin="round"/><circle cx="20.5" cy="16.5" r="2.2" fill="#f3f3f3"/></svg>
<svg style="left:1439px;top:238px;" width="22" height="24" viewBox="0 0 22 24"><path d="M16.5 7 L7.5 16.5 Q5.5 18.5 4 17 Q2.5 15.5 4.5 13.5 L14 4 Q17 1 19 3 Q21 5 18 8 L8.5 18 Q4.5 22 1.8 19.2 Q-1 16.5 3 12.5 L11 4.5" fill="none" stroke="#3c6e98" stroke-width="2.2" stroke-linecap="round"/></svg>
<svg style="left:1632px;top:236px;" width="24" height="24" viewBox="0 0 24 24"><circle cx="11" cy="11.5" r="10" fill="none" stroke="#333" stroke-width="1.9"/><path d="M6.5 11.5 L9.8 14.8 L15.8 8.5" fill="none" stroke="#333" stroke-width="1.9"/></svg>
<svg style="left:1826px;top:238.5px;" width="24" height="22" viewBox="0 0 24 22"><path d="M1.5 0.5 V17.5 H21.5" fill="none" stroke="#3c6e98" stroke-width="2.3"/><path d="M6 3.5 H10 M8.5 7.5 H13.5 M13 12 H18" stroke="#3c6e98" stroke-width="2.3"/></svg>
<svg style="left:2015px;top:238.5px;" width="22" height="21" viewBox="0 0 22 21"><rect x="1.1" y="1.1" width="16.6" height="16.8" rx="2" fill="none" stroke="#3c6e98" stroke-width="2.1"/><path d="M5.5 4.5 V8.5 M9.4 4.5 V7 M13.3 4.5 V10" stroke="#3c6e98" stroke-width="1.9"/></svg>
<svg style="left:2221.5px;top:238.5px;" width="24" height="22" viewBox="0 0 24 22"><path d="M1.3 0.5 V17.6 H21.5" fill="none" stroke="#3c6e98" stroke-width="2.2"/><path d="M5 13 L9.5 8.5 L12.5 10.8 L18.5 5" fill="none" stroke="#3c6e98" stroke-width="2"/><path d="M15 4 H19.5 V8.5" fill="none" stroke="#3c6e98" stroke-width="2"/></svg>
<svg style="left:2442.5px;top:238.5px;" width="24" height="22" viewBox="0 0 24 22"><path d="M1 8.5 L6 3.5 L10 6.5 L19.5 0.8" fill="none" stroke="#3c6e98" stroke-width="1.9"/><g fill="none" stroke="#3c6e98" stroke-width="1.6"><rect x="1.2" y="13" width="2.8" height="5" rx="1.4"/><rect x="6.6" y="10.5" width="2.8" height="7.5" rx="1.4"/><rect x="12" y="11.5" width="2.8" height="6.5" rx="1.4"/><rect x="17.4" y="9" width="2.8" height="9" rx="1.4"/></g></svg>
<svg style="left:2634px;top:237px;" width="30" height="24" viewBox="0 0 30 24"><circle cx="5" cy="4" r="3.2" fill="#3c6e98"/><circle cx="22" cy="4" r="3.2" fill="#3c6e98"/><path d="M0 12.5 Q0 8.5 5 8.5 Q8 8.5 9 10 L8 12.5 Z M27 12.5 Q27 8.5 22 8.5 Q19 8.5 18 10 L19 12.5 Z" fill="#3c6e98"/><circle cx="13.5" cy="9.5" r="4" fill="none" stroke="#3c6e98" stroke-width="2"/><path d="M6 22.5 Q6 15.5 13.5 15.5 Q21 15.5 21 22.5 Z" fill="none" stroke="#3c6e98" stroke-width="2"/></svg>
<div class="a" style="left:1038.2px;top:313.1px;width:35.4px;height:35.4px;border:1.5px solid #bdbdbd;border-radius:6px;background:#fff"></div>
<div class="a" style="left:1092.7px;top:309px;width:332.6px;height:42px;border:1.5px solid #dedede;border-radius:6px;background:#fff"></div>
<div class="t " style="left:1098.7px;top:319.9px;font-size:22.36px;color:#a9a9a9;font-weight:normal;font-style:normal;transform:scaleX(0.9662);transform-origin:left;">Select a modification to make</div>
<svg style="left:1391px;top:323px;" width="25" height="15" viewBox="0 0 25 15"><path d="M1 1.5 L12.5 13 L24 1.5" fill="none" stroke="#c0c0c0" stroke-width="2"/></svg>
<div class="a" style="left:2121.8px;top:309px;width:48.399999999999636px;height:42.4px;border:1.5px solid #dedede;border-radius:6px;background:#fff"></div>
<div class="a" style="left:2179px;top:309px;width:49.5px;height:42.4px;border:1.5px solid #dedede;border-radius:6px;background:#fff"></div>
<div class="a" style="left:2238.3px;top:309px;width:48.0px;height:42.4px;border:1.5px solid #dedede;border-radius:6px;background:#fff"></div>
<svg style="left:2133px;top:318px;" width="26" height="26" viewBox="0 0 26 26"><rect x="8.5" y="1.5" width="15" height="13.5" rx="2.5" fill="#fff" stroke="#555" stroke-width="1.6"/><path d="M7 7.5 H4 Q1.5 7.5 1.5 10 V20.5 Q1.5 23 4 23 H14.5 Q17 23 17 20.5 V17" fill="none" stroke="#555" stroke-width="1.6"/></svg>
<svg style="left:2191px;top:318px;" width="26" height="26" viewBox="0 0 26 26"><path d="M15 2 H22.5 V9.5 M22.5 2 L14 10.5 M10 22.5 H2.5 V15 M2.5 22.5 L11 14" fill="none" stroke="#333" stroke-width="1.6"/></svg>
<svg style="left:2250px;top:319px;" width="26" height="24" viewBox="0 0 26 24"><path d="M1.5 3 H23.5 M10 9 H23.5 M10 14.5 H23.5 M1.5 20.5 H23.5" stroke="#222" stroke-width="2.8"/><path d="M1 11.8 L6.5 8 V15.6 Z" fill="#222"/></svg>
<div class="a" style="left:2305.9px;top:310px;width:270.5px;height:41.4px;border:1.5px solid #9d9d9d;border-radius:6px;background:#fff"></div>
<div class="t " style="left:2311.0px;top:319.9px;font-size:22.36px;color:#222;font-weight:normal;font-style:normal;transform:scaleX(0.9662);transform-origin:left;">Show actions</div>
<svg style="left:2542px;top:323px;" width="25" height="15" viewBox="0 0 25 15"><path d="M1 1.5 L12.5 13 L24 1.5" fill="none" stroke="#777" stroke-width="2"/></svg>
<div class="a" style="left:2585.4px;top:309px;width:119.6px;height:42.4px;border:1.5px solid #9d9d9d;border-radius:6px;background:#fff"></div>
<div class="t " style="left:2597.4px;top:319.9px;font-size:22.36px;color:#222;font-weight:normal;font-style:normal;transform:scaleX(0.9662);transform-origin:left;">Folder</div>
<svg style="left:2672px;top:325px;" width="21" height="13" viewBox="0 0 21 13"><path d="M2 2 L10.5 10.5 L19 2" fill="none" stroke="#222" stroke-width="3.4"/></svg>
<div class="a" style="left:1028.8px;top:365px;width:1845.2px;height:20px;background:linear-gradient(#fff,#f1f1f1)"></div>
<div class="a" style="left:1028.8px;top:384.8px;width:1845.2px;height:26.1px;background:linear-gradient(#5a8bb4,#4a7399);box-shadow:0 -2px 6px rgba(0,0,0,.18);overflow:hidden"></div>
<div class="a" style="left:1028.8px;top:384.8px;width:1845.2px;height:26.1px;overflow:hidden">
<svg style="left:27px;top:7px;" width="24" height="22" viewBox="0 0 24 22"><path d="M1.5 19 V3 Q1.5 1.5 3 1.5 H8.5 L11 4.5 H19.5 Q21.5 4.5 21.5 6.5 V19" fill="none" stroke="#ddd" stroke-width="1.8"/><path d="M1.5 8 H21.5" stroke="#ddd" stroke-width="1.5"/></svg>
<div class="t" style="left:79.6px;top:5.6px;font-size:21.7px;color:#e2e2e2">QUALITY - Quality Management</div>
</div>
<div class="a" style="left:1028.8px;top:433.2px;width:1845.2px;height:1.8px;background:#4d7ba3"></div>
<div class="a" style="left:1923px;top:418px;width:58px;height:32px;background:#fff;border:2px solid #cfcfcf;border-radius:16px"></div>
<svg style="left:1940px;top:427px;" width="24" height="16" viewBox="0 0 24 16"><path d="M3 3.5 L12 12 L21 3.5" fill="none" stroke="#3c6e98" stroke-width="3.5"/></svg>
<div class="a" style="left:1038px;top:456.8px;width:1554px;height:50px;border:1.5px solid #cfd6de;border-radius:6px;background:#fff"></div>
<div class="t " style="left:1056.4px;top:471.3px;font-size:22.56px;color:#6c757d;font-weight:normal;font-style:normal;transform:scaleX(0.9662);transform-origin:left;">Action's title</div>
<div class="a" style="left:2543px;top:456.8px;width:49px;height:50px;background:#428bca;border-radius:0 6px 6px 0"></div>
<svg style="left:2558px;top:469px;" width="20" height="24" viewBox="0 0 20 24"><rect x="5" y="1.5" width="8.5" height="14" rx="4.25" fill="#fff"/><path d="M2 11 Q2 18.5 9.25 18.5 Q16.5 18.5 16.5 11 M9.25 18.5 V22 M4.5 22.5 H14" fill="none" stroke="#fff" stroke-width="1.6"/></svg>
<div class="a" style="left:2611px;top:455.5px;width:207px;height:51.5px;border:1.5px solid #cfd6de;border-radius:6px;background:#fff"></div>
<div class="a" style="left:2755px;top:455.5px;width:63px;height:51.5px;background:#428bca;border-radius:0 6px 6px 0"></div>
<svg style="left:2775px;top:468px;" width="24" height="25" viewBox="0 0 24 25"><rect x="1.5" y="4" width="20" height="19" rx="2" fill="#fff"/><rect x="5" y="1" width="2.4" height="5" rx="1" fill="#fff" stroke="#428bca" stroke-width="0.8"/><rect x="15.5" y="1" width="2.4" height="5" rx="1" fill="#fff" stroke="#428bca" stroke-width="0.8"/><path d="M1.5 9 H21.5 M1.5 13.5 H21.5 M1.5 18 H21.5 M6 9 V23 M10 9 V23 M14 9 V23 M18 9 V23" stroke="#428bca" stroke-width="1.1"/></svg>
<svg style="left:2837px;top:466px;" width="30" height="31" viewBox="0 0 30 31"><rect x="1" y="1" width="11" height="11" fill="none" stroke="#c9c9c9" stroke-width="1.6"/><rect x="16" y="1" width="11" height="11" fill="none" stroke="#c9c9c9" stroke-width="1.6"/><rect x="1" y="17" width="11" height="11" fill="none" stroke="#c9c9c9" stroke-width="1.6"/><rect x="16" y="17" width="11" height="11" fill="none" stroke="#c9c9c9" stroke-width="1.6"/></svg>
<div class="a" style="left:1038px;top:528.6px;width:1827px;height:44.5px;border:1.5px solid #e6e6e6;border-radius:6px;background:#fff"></div>
<div class="a" style="left:2831px;top:528.6px;width:1.5px;height:44.5px;background:#e6e6e6"></div>
<div class="t " style="left:1045.8px;top:538.6px;font-size:22.46px;color:#999;font-weight:normal;font-style:normal;transform:scaleX(0.9662);transform-origin:left;">QUALITY - Quality Management</div>
<svg style="left:2837px;top:545px;" width="22" height="14" viewBox="0 0 22 14"><path d="M1 1 L10.5 11 L20 1" fill="none" stroke="#888" stroke-width="2"/></svg>
<svg style="left:1037px;top:596px;" width="24" height="24" viewBox="0 0 24 24"><circle cx="11.8" cy="12" r="10" fill="none" stroke="#222" stroke-width="1.9"/><path d="M7.3 12 L10.6 15.3 L16.6 9" fill="none" stroke="#222" stroke-width="1.9"/></svg>
<div class="t " style="left:1067.1px;top:598.1px;font-size:22.36px;color:#222;font-weight:normal;font-style:normal;transform:scaleX(0.9662);transform-origin:left;">Parent action :</div>
<div class="a" style="left:1223.8px;top:584.2px;width:119.7px;height:48.6px;background:#f7f8f9;border-radius:4px"></div>
<div class="t " style="left:1242.0px;top:598.1px;font-size:22.36px;color:#111;font-weight:normal;font-style:normal;transform:scaleX(0.9662);transform-origin:left;">None</div>
<svg style="left:1314px;top:603px;" width="13" height="8" viewBox="0 0 13 8"><path d="M0.5 0.8 H12.5 L6.5 7.2 Z" fill="#222"/></svg>
<div class="a" style="left:1038.5px;top:642px;width:35.2px;height:35.4px;border:1.5px solid #bdbdbd;border-radius:6px;background:#fff"></div>
<div class="t " style="left:1084.3px;top:648.7px;font-size:22.36px;color:#444;font-weight:normal;font-style:normal;transform:scaleX(0.9662);transform-origin:left;">Duplicate the action</div>
<svg style="left:1037px;top:694px;" width="64" height="64" viewBox="0 0 64 64"><defs><clipPath id="pc"><circle cx="31.8" cy="31.5" r="30.8"/></clipPath></defs>
<circle cx="31.8" cy="31.5" r="30.8" fill="#c4c4c4"/>
<g clip-path="url(#pc)" fill="#f4f4f4"><ellipse cx="31.5" cy="24" rx="15" ry="16.5"/><path d="M21 34 H42 L44 44 Q56 48 64 64 H0 Q8 49 20 45 Z"/></g></svg>
<svg style="left:1076px;top:728px;" width="28" height="28" viewBox="0 0 28 28"><circle cx="13" cy="13.4" r="11.5" fill="#e8e8e8" stroke="#fff" stroke-width="1"/></svg>
<div class="t " style="left:1038.0px;top:760.1px;font-size:22.36px;color:#333;font-weight:normal;font-style:normal;transform:scaleX(0.9662);transform-origin:left;">None</div>
<div class="t " style="left:1039.0px;top:792.6px;font-size:20.29px;color:#444;font-weight:normal;font-style:italic;transform:scaleX(0.9662);transform-origin:left;">Person responsible</div>
<div class="t " style="left:1038.0px;top:851.4px;font-size:22.46px;color:#444;font-weight:normal;font-style:normal;transform:scaleX(0.9662);transform-origin:left;">Start time :</div>
<div class="a" style="left:1168.2px;top:832.8px;width:300px;height:49.7px;border:1.5px solid #cfd6de;border-radius:6px;background:#fff"></div>
<svg style="left:1950px;top:688px;" width="66" height="66" viewBox="0 0 66 66"><circle cx="32.6" cy="32.2" r="30" fill="none" stroke="#428bca" stroke-width="2" stroke-dasharray="3.2 3.2"/><path d="M32.6 20.5 V43 M21.2 32 H44" stroke="#3a7fc0" stroke-width="5"/></svg>
<div class="t " style="left:1952.5px;top:756.7px;font-size:22.36px;color:#333;font-weight:normal;font-style:normal;transform:scaleX(0.9662);transform-origin:left;">None</div>
<div class="t " style="left:1952.5px;top:787.9px;font-size:20.49px;color:#444;font-weight:normal;font-style:italic;transform:scaleX(0.9662);transform-origin:left;">Contributor</div>
<div class="t " style="left:1952.5px;top:851.6px;font-size:22.25px;color:#444;font-weight:normal;font-style:normal;transform:scaleX(0.9662);transform-origin:left;">Recurrence :</div>
<svg style="left:2092px;top:848px;" width="36" height="42" viewBox="0 0 36 42"><path d="M3.5 14 Q6 4 15.5 4 Q21.5 4 25 8.5" fill="none" stroke="#3c6e98" stroke-width="3.6"/><path d="M27.5 2 V12 H17.5 Z" fill="#3c6e98"/>
<path d="M25 16 Q22.5 26 13 26 Q7 26 3.5 21.5" fill="none" stroke="#3c6e98" stroke-width="3.6"/><path d="M1 28 V18 H11 Z" fill="#3c6e98"/>
<circle cx="25.5" cy="32.2" r="8" fill="#2fb24a" stroke="#fff" stroke-width="1.5"/><path d="M25.5 27.5 V37 M20.8 32.2 H30.2" stroke="#fff" stroke-width="2.4"/></svg>
<div class="a" style="left:1029.3px;top:904.4px;width:1845.1px;height:142.8px;border:1.5px solid #c9c9c9;border-radius:6px;background:#fff"></div>
<div class="a" style="left:1030.8px;top:905.9px;width:1842.1px;height:69.1px;background:#fafafa;border-bottom:1.5px solid #c9c9c9;border-radius:5px 5px 0 0"></div>
<div class="t " style="left:1053.3px;top:926.3px;font-size:31.00px;color:#333;font-weight:bold;font-style:normal;">B</div>
<svg style="left:1114px;top:926px;" width="24" height="28" viewBox="0 0 24 28"><path d="M7 1.5 H20.5 M2.5 26 H15.5 M14 1.5 L8.8 26" fill="none" stroke="#333" stroke-width="2.3"/></svg>
<svg style="left:1173px;top:926px;" width="30" height="30" viewBox="0 0 30 30"><path d="M4 2 V15 Q4 23 13 23 Q22 23 22 15 V2" fill="none" stroke="#333" stroke-width="2.1"/><path d="M1.5 27 H25" stroke="#333" stroke-width="2.4"/></svg>
<svg style="left:1597px;top:928px;" width="22" height="24" viewBox="0 0 22 24"><path d="M1 3.5 H19.5 M1 20 H19.5" stroke="#333" stroke-width="2.4"/></svg>
<svg style="left:1645px;top:926px;" width="36" height="28" viewBox="0 0 36 28"><path d="M4 2.2 H32 M14 13 H32 M4 24 H32" stroke="#999" stroke-width="2.2" stroke-linecap="round"/><path d="M1.5 8 L9.5 13 L1.5 18 Z" fill="#999"/></svg>
<svg style="left:1707px;top:926px;" width="36" height="28" viewBox="0 0 36 28"><path d="M4 2.2 H32 M14 13 H32 M4 24 H32" stroke="#999" stroke-width="2.2" stroke-linecap="round"/><path d="M9 8 L1 13 L9 18 Z" fill="#999"/></svg>
<div class="a" style="left:1759.25px;top:912.9px;width:1.5px;height:53.5px;background:#cfcfcf"></div>
<div class="a" style="left:1855.45px;top:912.9px;width:1.5px;height:53.5px;background:#cfcfcf"></div>
<div class="a" style="left:2471.15px;top:912.9px;width:1.5px;height:53.5px;background:#cfcfcf"></div>
<div class="a" style="left:2541.35px;top:912.9px;width:1.5px;height:53.5px;background:#cfcfcf"></div>
<div class="a" style="left:2637.95px;top:912.9px;width:1.5px;height:53.5px;background:#cfcfcf"></div>
<div class="a" style="left:2708.25px;top:912.9px;width:1.5px;height:53.5px;background:#cfcfcf"></div>
<div class="a" style="left:2777.65px;top:912.9px;width:1.5px;height:53.5px;background:#cfcfcf"></div>
<svg style="left:1779px;top:926px;" width="32" height="28" viewBox="0 0 32 28"><path d="M1.5 2.2 H29.5 M1.5 9.6 H20.5 M1.5 16.6 H29.5 M1.5 24 H20.5" stroke="#333" stroke-width="2.6" stroke-linecap="round"/></svg>
<svg style="left:1825.5px;top:935.5px;" width="17" height="11" viewBox="0 0 17 11"><path d="M1.5 1.5 L8.2 8.8 L15 1.5" fill="none" stroke="#333" stroke-width="2.3"/></svg>
<div class="t " style="left:1881.0px;top:927.2px;font-size:23.91px;color:#333;font-weight:normal;font-style:normal;transform:scaleX(0.9662);transform-origin:left;">Paragraph</div>
<svg style="left:2080.3px;top:935.5px;" width="17" height="11" viewBox="0 0 17 11"><path d="M1.5 1.5 L8.2 8.8 L15 1.5" fill="none" stroke="#333" stroke-width="2.3"/></svg>
<svg style="left:2131px;top:926px;" width="34" height="30" viewBox="0 0 34 30"><path d="M2 26.5 L11.5 1.5 L21 26.5 M6 17 H17" fill="none" stroke="#333" stroke-width="2.1"/><path d="M19.5 2.5 H30.5 M21 8 H30.5 M22.5 13.5 H30.5" stroke="#333" stroke-width="2.2"/></svg>
<svg style="left:2179.3px;top:935.5px;" width="17" height="11" viewBox="0 0 17 11"><path d="M1.5 1.5 L8.2 8.8 L15 1.5" fill="none" stroke="#333" stroke-width="2.3"/></svg>
<svg style="left:2217px;top:926px;" width="40" height="30" viewBox="0 0 40 30"><path d="M2 26.5 L11.5 1.5 L21 26.5 M6 17 H17" fill="none" stroke="#333" stroke-width="2.1"/><path d="M30 2.5 V25.5" stroke="#333" stroke-width="2"/><path d="M25.5 6.5 L30 1 L34.5 6.5 Z M25.5 21.5 L30 27 L34.5 21.5 Z" fill="#333"/></svg>
<svg style="left:2266.6px;top:935.5px;" width="17" height="11" viewBox="0 0 17 11"><path d="M1.5 1.5 L8.2 8.8 L15 1.5" fill="none" stroke="#333" stroke-width="2.3"/></svg>
<svg style="left:2309px;top:925px;" width="30" height="32" viewBox="0 0 30 32"><path d="M4 22 L13 1.5 L22 22 M8 13.5 H18" fill="none" stroke="#333" stroke-width="2.1"/><path d="M2.5 28.5 H24" stroke="#333" stroke-width="3.4" stroke-linecap="round"/></svg>
<svg style="left:2354px;top:935.5px;" width="17" height="11" viewBox="0 0 17 11"><path d="M1.5 1.5 L8.2 8.8 L15 1.5" fill="none" stroke="#333" stroke-width="2.3"/></svg>
<svg style="left:2396px;top:924px;" width="32" height="32" viewBox="0 0 32 32"><rect x="1" y="1.3" width="27.8" height="28.4" rx="3" fill="#333"/><path d="M5 26 L14 4 L23 26 M8.5 18 H19.5" fill="none" stroke="#fff" stroke-width="1.9"/></svg>
<svg style="left:2441.6px;top:935.5px;" width="17" height="11" viewBox="0 0 17 11"><path d="M1.5 1.5 L8.2 8.8 L15 1.5" fill="none" stroke="#333" stroke-width="2.3"/></svg>
<svg style="left:2489px;top:926px;" width="36" height="28" viewBox="0 0 36 28"><path d="M2 6.5 L4.5 9 L9.5 3.5 M2 22.5 L4.5 25 L9.5 19.5" fill="none" stroke="#333" stroke-width="2.2"/><path d="M14 6.5 H33 M14 23 H33" stroke="#333" stroke-width="2.6"/></svg>
<svg style="left:2561px;top:925px;" width="34" height="32" viewBox="0 0 34 32"><rect x="1.5" y="1.5" width="29" height="27.8" rx="3.5" fill="#333"/><g fill="#fff"><rect x="4.6" y="7" width="6.4" height="4.6"/><rect x="12.8" y="7" width="6.4" height="4.6"/><rect x="21" y="7" width="6.4" height="4.6"/><rect x="4.6" y="13.5" width="6.4" height="4.6"/><rect x="12.8" y="13.5" width="6.4" height="4.6"/><rect x="21" y="13.5" width="6.4" height="4.6"/><rect x="4.6" y="20" width="6.4" height="4.6"/><rect x="12.8" y="20" width="6.4" height="4.6"/><rect x="21" y="20" width="6.4" height="4.6"/></g></svg>
<svg style="left:2607.8px;top:935.5px;" width="17" height="11" viewBox="0 0 17 11"><path d="M1.5 1.5 L8.2 8.8 L15 1.5" fill="none" stroke="#333" stroke-width="2.3"/></svg>
<div class="a" style="left:2658.9px;top:938.2px;width:30px;height:3px;background:#333;border-radius:1px"></div>
<svg style="left:2729px;top:922px;" width="34" height="36" viewBox="0 0 34 36"><path d="M14 11 L17.5 7.5 Q22 3 26.5 7.5 Q31 12 26.5 16.5 L23 20" fill="none" stroke="#333" stroke-width="2.4" stroke-linecap="round"/><path d="M18 24 L14.5 27.5 Q10 32 5.5 27.5 Q1 23 5.5 18.5 L9 15" fill="none" stroke="#333" stroke-width="2.4" stroke-linecap="round"/><path d="M12 22 L20 13" stroke="#333" stroke-width="2.4" stroke-linecap="round"/></svg>
<svg style="left:2798px;top:925px;" width="34" height="30" viewBox="0 0 34 30"><rect x="2" y="2.5" width="28.5" height="24.5" rx="2" fill="none" stroke="#333" stroke-width="2.6"/><path d="M2.5 24.5 L10 15 L15 20 L21.5 13.5 L30 22 V26.5 H2.5 Z" fill="#333"/><circle cx="23.7" cy="8.8" r="2.8" fill="#333"/></svg>
<div class="t " style="left:1044.5px;top:1001.2px;font-size:22.36px;color:#888;font-weight:normal;font-style:normal;transform:scaleX(0.9662);transform-origin:left;">Description</div>
<div class="t " style="left:1038.6px;top:1081.0px;font-size:21.60px;color:#444;font-weight:bold;font-style:normal;">Custom fields for the folder template "Quality EN"</div>
<div class="t " style="left:1039.4px;top:1124.7px;font-size:22.36px;color:#444;font-weight:normal;font-style:normal;transform:scaleX(0.9662);transform-origin:left;">1. Process :</div>
<div class="a" style="left:1162.3px;top:1112.4px;width:270.7px;height:51.4px;border:1.5px solid #cfcfcf;border-radius:6px;background:#fff"></div>
<div class="t " style="left:1189.7px;top:1127.5px;font-size:22.36px;color:#333;font-weight:normal;font-style:normal;transform:scaleX(0.9662);transform-origin:left;">None</div>
<svg style="left:1404px;top:1135px;" width="13" height="8" viewBox="0 0 13 8"><path d="M0.5 0.5 H12 L6.25 6.6 Z" fill="#333"/></svg>
<div class="t " style="left:1437.0px;top:1124.7px;font-size:22.36px;color:#444;font-weight:normal;font-style:normal;transform:scaleX(0.9662);transform-origin:left;">2. Type :</div>
<div class="a" style="left:1530px;top:1112.4px;width:302px;height:51.4px;border:1.5px solid #cfcfcf;border-radius:6px;background:#fff"></div>
<div class="t " style="left:1556.4px;top:1127.5px;font-size:22.36px;color:#333;font-weight:normal;font-style:normal;transform:scaleX(0.9662);transform-origin:left;">None</div>
<svg style="left:1802px;top:1135px;" width="13" height="8" viewBox="0 0 13 8"><path d="M0.5 0.5 H12 L6.25 6.6 Z" fill="#333"/></svg>
<div class="a" style="left:1037.7px;top:1191.8px;width:1828px;height:1.5px;background:#e8e8e8"></div>
<div class="a" style="left:1038.8px;top:1204.4px;width:34.6px;height:34.6px;border:1.5px solid #bdbdbd;border-radius:6px;background:#fff"></div>
<div class="t " style="left:1083.7px;top:1210.3px;font-size:22.36px;color:#444;font-weight:normal;font-style:normal;transform:scaleX(0.9662);transform-origin:left;">Split the action into identical sub actions for different people</div>
<div class="a" style="left:2648px;top:1203px;width:220px;height:41px;border:1.5px solid #dedede;border-radius:6px;background:#fff;overflow:hidden">
<div class="t" style="left:4.3px;top:10.3px;font-size:21.6px;color:#aaa;width:170px;overflow:hidden">People responsible</div>
</div>
<svg style="left:2832px;top:1217px;" width="26" height="15" viewBox="0 0 26 15"><path d="M1 1.5 L12.5 13 L24 1.5" fill="none" stroke="#c0c0c0" stroke-width="2"/></svg>
<div class="t " style="left:1057.0px;top:1269.4px;font-size:27.84px;color:#444;font-weight:normal;font-style:normal;transform:scaleX(0.9662);transform-origin:left;">Documents :</div>
<div class="t " style="left:1217.0px;top:1274.0px;font-size:22.46px;color:#444;font-weight:normal;font-style:normal;transform:scaleX(0.9662);transform-origin:left;">No document</div>
<div class="a" style="left:1047.3px;top:1313px;width:222.7px;height:52px;border:1.5px solid #cfcfcf;border-radius:6px;background:#fff"></div>
<svg style="left:1064px;top:1326px;" width="26" height="24" viewBox="0 0 26 24"><rect x="1.5" y="1.5" width="21.5" height="15.5" rx="1.5" fill="none" stroke="#333" stroke-width="2.6"/><rect x="1" y="14.5" width="23" height="3.5" fill="#333"/><path d="M9 18 H16 V20.5 H9 Z" fill="#333"/><rect x="7" y="20" width="11" height="2" fill="#333"/></svg>
<div class="t " style="left:1095.0px;top:1327.5px;font-size:22.46px;color:#333;font-weight:normal;font-style:normal;transform:scaleX(0.9662);transform-origin:left;">Add a document</div>
<div class="a" style="left:2739px;top:1390px;width:108px;height:52px;background:#9dcbee;border-radius:6px"></div>
<svg style="left:2757px;top:1405px;" width="22" height="19" viewBox="0 0 22 19"><path d="M2.5 9.5 L8.5 15.5 L19.5 3.5" fill="none" stroke="#fff" stroke-width="4.2"/></svg>
<div class="t " style="left:2791.3px;top:1404.6px;font-size:22.36px;color:#fff;font-weight:normal;font-style:normal;transform:scaleX(0.9662);transform-origin:left;">Add</div>
<div class="a" style="left:1223.3px;top:633px;width:360px;height:361.3px;background:#fff;border:1px solid #dedede;border-radius:0 0 4px 4px;overflow:hidden">
<div class="a" style="left:6.5px;top:6.4px;width:346px;height:59.6px;border:2px solid #8dbcf3;border-radius:5px;box-shadow:0 0 0 2px rgba(140,185,245,.35)"></div>
<div class="a" style="left:0;top:73px;width:360px;height:1.5px;background:#e3e3e3"></div>
<div class="t" style="left:20.5px;top:83.5px;font-size:21.6px;color:#3c6e98">No parent action</div>
<div class="t" style="left:20.5px;top:126.7px;font-size:21.6px;color:#3c6e98">541 - Add links to key process dashboards</div>
<div class="t" style="left:20.5px;top:171.3px;font-size:21.6px;color:#3c6e98">557 - Adding elements to the emergency plan</div>
<div class="t" style="left:20.5px;top:214.7px;font-size:21.6px;color:#3c6e98">558 - Analysis for the premises of external sites</div>
<div class="t" style="left:20.5px;top:258.0px;font-size:21.6px;color:#3c6e98">556 - Carry over the improvement opportunities</div>
<div class="t" style="left:20.5px;top:300.2px;font-size:21.6px;color:#3c6e98">552 - Consolidate projects with budget</div>
<div class="t" style="left:20.5px;top:343.7px;font-size:21.6px;color:#3c6e98">554 - Documentation of authorities</div>
</div>
<div class="a" style="left:1px;top:255px;width:118.3px;height:115.4px;border:9px solid #b0221b;border-radius:19px"></div>
<svg style="left:105px;top:240px;" width="144" height="144" viewBox="0 0 144 144"><circle cx="72" cy="72" r="69" fill="#b0221b" stroke="#fff" stroke-width="7"/></svg>
<svg style="left:150px;top:280px;" width="50" height="70" viewBox="0 0 50 70"><path d="M22.2 7.6 L34.9 7.6 L34.9 54 L42 54 Q43.5 54 43.5 55.5 L43.5 60 Q43.5 61.5 42 61.5 L12.3 61.5 Q10.8 61.5 10.8 60 L10.8 55.5 Q10.8 54 12.3 54 L22.2 54 L22.2 17.5 L11.5 23.5 Q11 23.8 11 23.2 L11 15.5 Q11 15 11.5 14.7 Z" fill="#fff"/></svg>
<div class="a" style="left:1023px;top:570px;width:570px;height:79.5px;border:9.5px solid #b0221b;border-radius:15px"></div>
<div class="a" style="left:1209px;top:640px;width:383.5px;height:361px;border:10px solid #b0221b;border-radius:50px"></div>
<svg style="left:1491px;top:575px;" width="145" height="145" viewBox="0 0 145 145"><circle cx="72.4" cy="72.6" r="68.5" fill="#b0221b" stroke="#fff" stroke-width="6"/></svg>
<div class="t " style="left:1543.0px;top:613.6px;font-size:75.00px;color:#fff;font-weight:bold;font-style:normal;-webkit-text-stroke:0.5px #fff">2</div>
</body></html>
